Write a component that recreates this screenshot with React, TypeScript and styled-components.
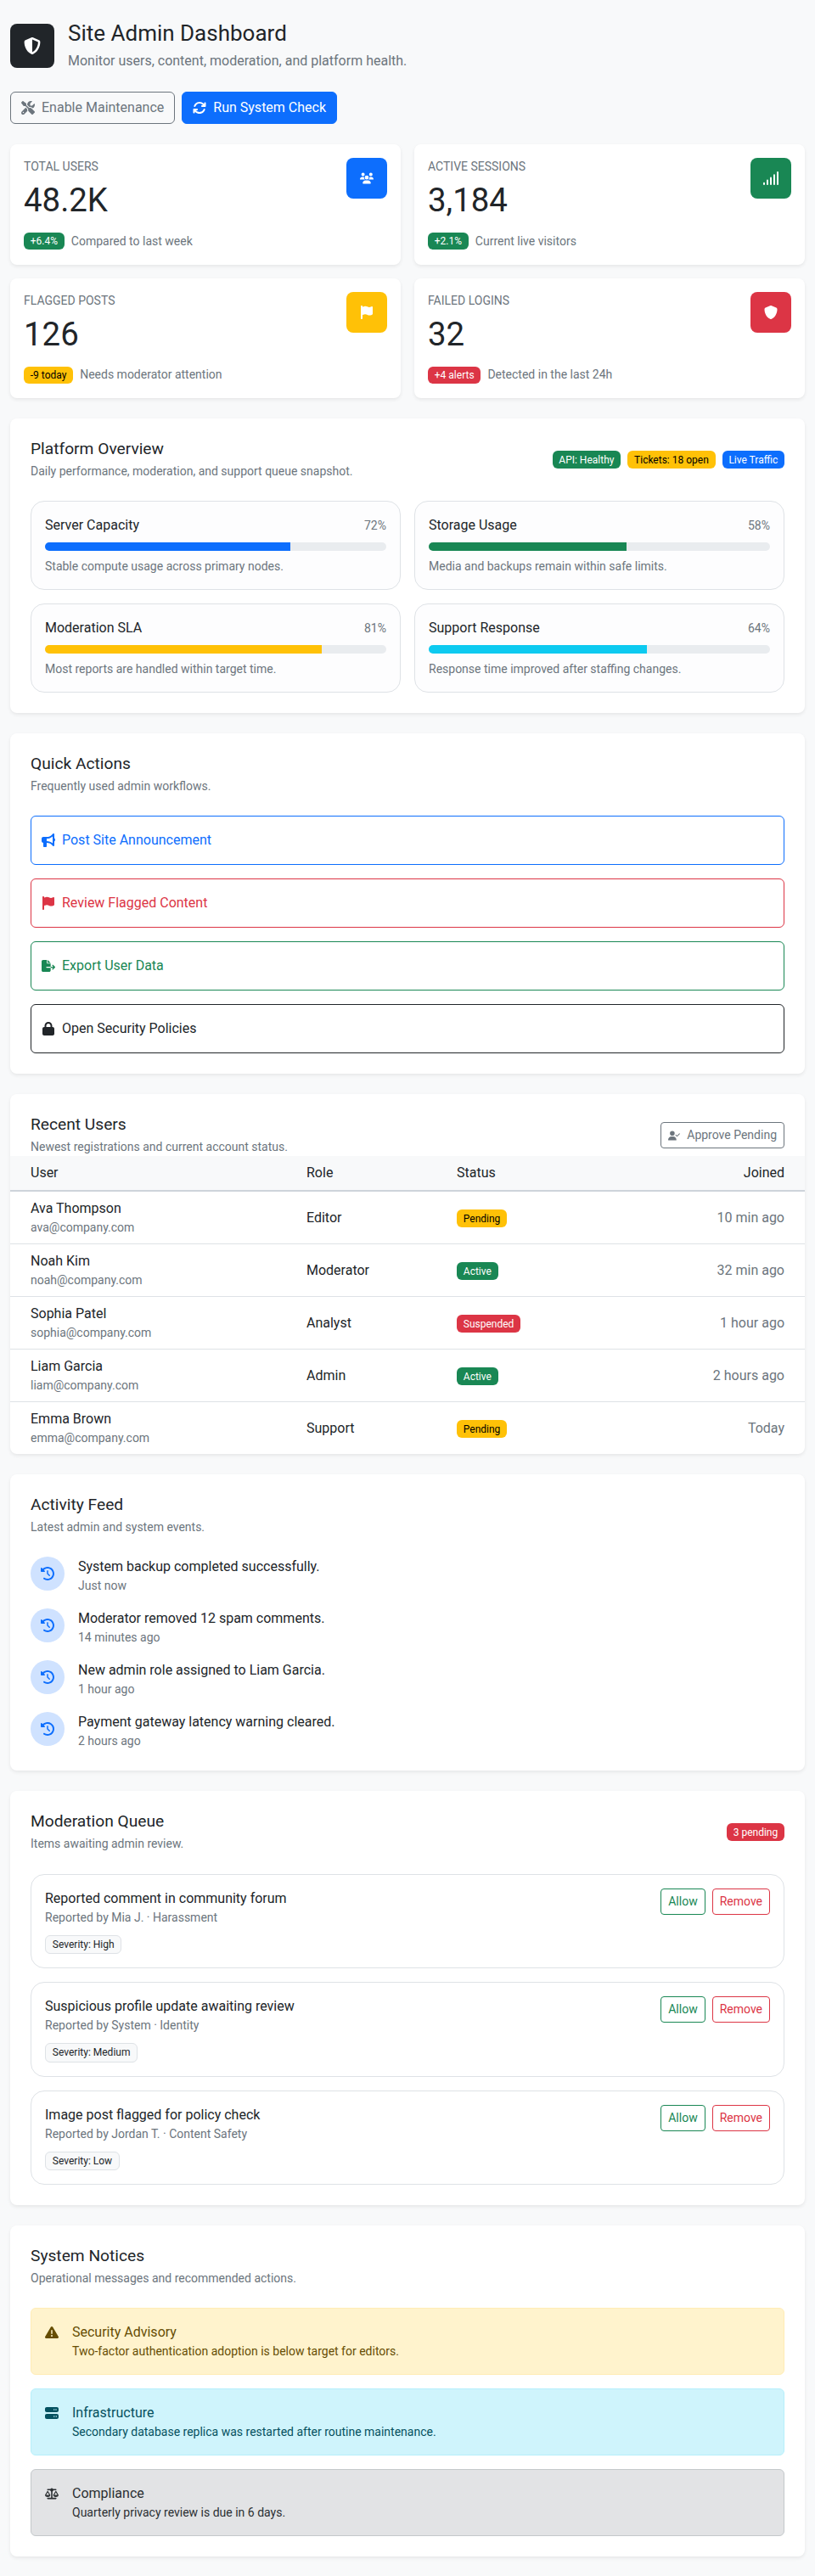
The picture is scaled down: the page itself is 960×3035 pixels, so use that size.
import React from "react";
import styled, { createGlobalStyle } from "styled-components";
import {
  FaArrowsRotate,
  FaBullhorn,
  FaClockRotateLeft,
  FaFileExport,
  FaFlag,
  FaLock,
  FaScaleBalanced,
  FaScrewdriverWrench,
  FaServer,
  FaShield,
  FaShieldHalved,
  FaTriangleExclamation,
  FaUserCheck,
  FaUsers,
} from "react-icons/fa6";

const colors = {
  primary: "#0d6efd",
  success: "#198754",
  warning: "#ffc107",
  danger: "#dc3545",
  info: "#0dcaf0",
  dark: "#212529",
  muted: "#6c757d",
  border: "#dee2e6",
};

type Tone = "primary" | "success" | "warning" | "danger" | "info" | "dark" | "muted";

const GlobalStyle = createGlobalStyle`
  * {
    box-sizing: border-box;
  }
  body {
    margin: 0;
    background: #f8f9fa;
    color: #212529;
    font-family: Roboto, "Liberation Sans", Arial, sans-serif;
    font-size: 16px;
    line-height: 1.5;
  }
  svg {
    flex: none;
    width: auto;
    height: 1em;
  }
`;

const Page = styled.main`
  display: flex;
  flex-direction: column;
  gap: 24px;
  padding: 24px 12px;
`;

const Header = styled.header`
  display: flex;
  align-items: center;
  gap: 16px;
  height: 60px;
`;

const LogoBox = styled.div`
  display: flex;
  align-items: center;
  justify-content: center;
  flex: none;
  width: 52px;
  height: 52px;
  border-radius: 8px;
  background: ${colors.dark};
  color: #fff;
  font-size: 20px;
`;

const PageTitle = styled.h1`
  margin: 0 0 4.8px;
  font-size: 26px;
  font-weight: 400;
  line-height: 1.2;
`;

const PageSubtitle = styled.p`
  margin: 0;
  color: ${colors.muted};
`;

const Toolbar = styled.div`
  display: flex;
  gap: 8px;
`;

const ToolbarButton = styled.button<{ $solid?: boolean }>`
  display: flex;
  align-items: center;
  gap: 8px;
  height: 38px;
  padding: 6px 12px;
  border: 1px solid ${(p) => (p.$solid ? colors.primary : colors.muted)};
  border-radius: 6px;
  background: ${(p) => (p.$solid ? colors.primary : "transparent")};
  color: ${(p) => (p.$solid ? "#fff" : colors.muted)};
  font: inherit;
`;

const StatGrid = styled.div`
  display: grid;
  grid-template-columns: 1fr 1fr;
  gap: 16px;
`;

const Card = styled.section`
  border-radius: 8px;
  background: #fff;
  box-shadow: 0 2px 4px rgba(0, 0, 0, 0.075);
`;

const StatCard = styled(Card)`
  padding: 16px;
`;

const StatTop = styled.div`
  display: flex;
  align-items: flex-start;
  justify-content: space-between;
`;

const StatLabel = styled.div`
  margin-bottom: 8px;
  color: ${colors.muted};
  font-size: 14px;
  text-transform: uppercase;
`;

const StatValue = styled.div`
  font-size: 38.4px;
  line-height: 42px;
`;

const StatIcon = styled.div<{ $tone: Tone }>`
  display: flex;
  align-items: center;
  justify-content: center;
  width: 48px;
  height: 48px;
  border-radius: 8px;
  background: ${(p) => colors[p.$tone]};
  color: #fff;
`;

const StatFoot = styled.div`
  display: flex;
  align-items: center;
  gap: 8px;
  height: 22.5px;
  margin-top: 16px;
  color: ${colors.muted};
  font-size: 14px;
`;

const Badge = styled.span<{ $tone: Tone }>`
  display: inline-block;
  padding: 4.2px 7.8px;
  border-radius: 6px;
  background: ${(p) => colors[p.$tone]};
  color: ${(p) => (p.$tone === "warning" ? "#000" : "#fff")};
  font-size: 12px;
  line-height: 12px;
  white-space: nowrap;
`;

const Panel = styled(Card)`
  padding: 24px;
`;

const PanelHead = styled.div<{ $tight?: boolean }>`
  display: flex;
  align-items: center;
  justify-content: space-between;
  margin-bottom: ${(p) => (p.$tight ? "0" : "24px")};
`;

const PanelTitle = styled.h2`
  margin: 0 0 4px;
  font-size: 19.2px;
  font-weight: 400;
  line-height: 24px;
`;

const PanelSub = styled.p`
  margin: 0;
  color: ${colors.muted};
  font-size: 14px;
`;

const BadgeRow = styled.div`
  display: flex;
  gap: 8px;
`;

const MetricGrid = styled.div`
  display: grid;
  grid-template-columns: 1fr 1fr;
  gap: 16px;
`;

const Metric = styled.div`
  padding: 16px;
  border: 1px solid ${colors.border};
  border-radius: 16px;
  background: #fdfdfe;
`;

const MetricHead = styled.div`
  display: flex;
  align-items: center;
  justify-content: space-between;
`;

const MetricValue = styled.span`
  color: ${colors.muted};
  font-size: 14px;
`;

const Track = styled.div`
  height: 10px;
  margin: 8px 0;
  border-radius: 5px;
  background: #e9ecef;
  overflow: hidden;
`;

const Fill = styled.div<{ $tone: Tone }>`
  height: 100%;
  background: ${(p) => colors[p.$tone]};
`;

const MetricNote = styled.div`
  color: ${colors.muted};
  font-size: 14px;
`;

const ActionList = styled.div`
  display: flex;
  flex-direction: column;
  gap: 16px;
`;

const ActionButton = styled.button<{ $tone: Tone }>`
  display: flex;
  align-items: center;
  gap: 8px;
  width: 100%;
  padding: 16px 12px;
  border: 1px solid ${(p) => colors[p.$tone]};
  border-radius: 6px;
  background: transparent;
  color: ${(p) => colors[p.$tone]};
  font: inherit;
`;

const SmallButton = styled.button<{ $tone: Tone }>`
  display: flex;
  align-items: center;
  gap: 8px;
  height: 31px;
  padding: 4px 8px;
  border: 1px solid ${(p) => colors[p.$tone]};
  border-radius: 4px;
  background: transparent;
  color: ${(p) => colors[p.$tone]};
  font: inherit;
  font-size: 14px;
`;

const TablePanel = styled(Card)`
  padding-top: 24px;
  overflow: hidden;
`;

const TableHeadArea = styled.div`
  padding: 0 24px;
`;

const Table = styled.table`
  width: 100%;
  border-collapse: collapse;
  table-layout: fixed;
`;

const Th = styled.th<{ $w: number; $right?: boolean }>`
  width: ${(p) => p.$w}px;
  padding: 8px 12px;
  border-bottom: 2px solid #ced4da;
  background: #f8f9fa;
  font-weight: 400;
  text-align: ${(p) => (p.$right ? "right" : "left")};
  &:first-child {
    padding-left: 24px;
  }
  &:last-child {
    padding-right: 24px;
  }
`;

const Td = styled.td<{ $right?: boolean }>`
  padding: 8px 12px;
  border-bottom: 1px solid ${colors.border};
  text-align: ${(p) => (p.$right ? "right" : "left")};
  color: ${(p) => (p.$right ? colors.muted : "inherit")};
  &:first-child {
    padding-left: 24px;
  }
  &:last-child {
    padding-right: 24px;
  }
  tr:last-child & {
    border-bottom: 0;
  }
`;

const Email = styled.div`
  color: ${colors.muted};
  font-size: 14px;
`;

const FeedList = styled.div`
  display: flex;
  flex-direction: column;
  gap: 16px;
`;

const FeedItem = styled.div`
  display: flex;
  gap: 16px;
`;

const FeedIcon = styled.div`
  display: flex;
  align-items: center;
  justify-content: center;
  flex: none;
  width: 40px;
  height: 40px;
  border-radius: 50%;
  background: #cfe2ff;
  color: ${colors.primary};
`;

const Muted = styled.div`
  color: ${colors.muted};
  font-size: 14px;
`;

const QueueList = styled.div`
  display: flex;
  flex-direction: column;
  gap: 16px;
  margin-top: 25px;
`;

const QueueHead = styled(PanelHead)`
  margin-bottom: 0;
`;

const QueueItem = styled.div`
  display: flex;
  align-items: flex-start;
  justify-content: space-between;
  padding: 16px;
  border: 1px solid ${colors.border};
  border-radius: 16px;
`;

const QueueActions = styled.div`
  display: flex;
  gap: 8px;
`;

const SeverityTag = styled.div`
  width: fit-content;
  height: 22.33px;
  margin-top: 10px;
  padding: 0 7.8px;
  border: 1px solid ${colors.border};
  border-radius: 6px;
  background: #f8f9fa;
  font-size: 12px;
  line-height: 20px;
`;

const NoticeList = styled.div`
  display: flex;
  flex-direction: column;
  gap: 16px;
`;

const noticeTones = {
  warning: { bg: "#fff3cd", line: "#ffecb5", text: "#664d03" },
  info: { bg: "#cff4fc", line: "#b6effb", text: "#055160" },
  dark: { bg: "#e2e3e5", line: "#c4c8cb", text: "#2b2f32" },
};

const Notice = styled.div<{ $tone: keyof typeof noticeTones }>`
  display: flex;
  gap: 16px;
  padding: 16px;
  border: 1px solid ${(p) => noticeTones[p.$tone].line};
  border-radius: 6px;
  background: ${(p) => noticeTones[p.$tone].bg};
  color: ${(p) => noticeTones[p.$tone].text};
`;

const NoticeIcon = styled.div`
  display: flex;
  align-items: center;
  height: 24px;
`;

const NoticeText = styled.div`
  font-size: 14px;
`;

const NoticeTitle = styled.div`
  font-size: 16px;
`;

// five rising bars, kept on whole pixels so they stay separate at this size
const SignalBars = () => (
  <svg viewBox="0 0 20 16" fill="currentColor" aria-hidden="true">
    <rect x="1" y="12.8" width="2" height="3.2" rx="1" />
    <rect x="5" y="9.6" width="2" height="6.4" rx="1" />
    <rect x="9" y="6.4" width="2" height="9.6" rx="1" />
    <rect x="13" y="3.2" width="2" height="12.8" rx="1" />
    <rect x="17" y="0" width="2" height="16" rx="1" />
  </svg>
);

const stats = [
  { label: "Total Users", value: "48.2K", tone: "primary", icon: <FaUsers />, badge: "+6.4%", badgeTone: "success", note: "Compared to last week" },
  { label: "Active Sessions", value: "3,184", tone: "success", icon: <SignalBars />, badge: "+2.1%", badgeTone: "success", note: "Current live visitors" },
  { label: "Flagged Posts", value: "126", tone: "warning", icon: <FaFlag />, badge: "-9 today", badgeTone: "warning", note: "Needs moderator attention" },
  { label: "Failed Logins", value: "32", tone: "danger", icon: <FaShield />, badge: "+4 alerts", badgeTone: "danger", note: "Detected in the last 24h" },
] as const;

const metrics = [
  { name: "Server Capacity", pct: 72, tone: "primary", note: "Stable compute usage across primary nodes." },
  { name: "Storage Usage", pct: 58, tone: "success", note: "Media and backups remain within safe limits." },
  { name: "Moderation SLA", pct: 81, tone: "warning", note: "Most reports are handled within target time." },
  { name: "Support Response", pct: 64, tone: "info", note: "Response time improved after staffing changes." },
] as const;

const actions = [
  { label: "Post Site Announcement", tone: "primary", icon: <FaBullhorn /> },
  { label: "Review Flagged Content", tone: "danger", icon: <FaFlag /> },
  { label: "Export User Data", tone: "success", icon: <FaFileExport /> },
  { label: "Open Security Policies", tone: "dark", icon: <FaLock /> },
] as const;

const users = [
  { name: "Ava Thompson", email: "ava@company.com", role: "Editor", status: "Pending", tone: "warning", joined: "10 min ago" },
  { name: "Noah Kim", email: "noah@company.com", role: "Moderator", status: "Active", tone: "success", joined: "32 min ago" },
  { name: "Sophia Patel", email: "sophia@company.com", role: "Analyst", status: "Suspended", tone: "danger", joined: "1 hour ago" },
  { name: "Liam Garcia", email: "liam@company.com", role: "Admin", status: "Active", tone: "success", joined: "2 hours ago" },
  { name: "Emma Brown", email: "emma@company.com", role: "Support", status: "Pending", tone: "warning", joined: "Today" },
] as const;

const feed = [
  { text: "System backup completed successfully.", time: "Just now" },
  { text: "Moderator removed 12 spam comments.", time: "14 minutes ago" },
  { text: "New admin role assigned to Liam Garcia.", time: "1 hour ago" },
  { text: "Payment gateway latency warning cleared.", time: "2 hours ago" },
];

const queue = [
  { title: "Reported comment in community forum", meta: "Reported by Mia J. · Harassment", severity: "High" },
  { title: "Suspicious profile update awaiting review", meta: "Reported by System · Identity", severity: "Medium" },
  { title: "Image post flagged for policy check", meta: "Reported by Jordan T. · Content Safety", severity: "Low" },
];

const notices = [
  { title: "Security Advisory", text: "Two-factor authentication adoption is below target for editors.", tone: "warning", icon: <FaTriangleExclamation /> },
  { title: "Infrastructure", text: "Secondary database replica was restarted after routine maintenance.", tone: "info", icon: <FaServer /> },
  { title: "Compliance", text: "Quarterly privacy review is due in 6 days.", tone: "dark", icon: <FaScaleBalanced /> },
] as const;

const App = () => {
  return (
    <Page>
      <GlobalStyle />
      <Header>
        <LogoBox>
          <FaShieldHalved />
        </LogoBox>
        <div>
          <PageTitle>Site Admin Dashboard</PageTitle>
          <PageSubtitle>Monitor users, content, moderation, and platform health.</PageSubtitle>
        </div>
      </Header>

      <Toolbar>
        <ToolbarButton>
          <FaScrewdriverWrench />
          Enable Maintenance
        </ToolbarButton>
        <ToolbarButton $solid>
          <FaArrowsRotate />
          Run System Check
        </ToolbarButton>
      </Toolbar>

      <StatGrid>
        {stats.map((s) => (
          <StatCard key={s.label}>
            <StatTop>
              <div>
                <StatLabel>{s.label}</StatLabel>
                <StatValue>{s.value}</StatValue>
              </div>
              <StatIcon $tone={s.tone}>{s.icon}</StatIcon>
            </StatTop>
            <StatFoot>
              <Badge $tone={s.badgeTone}>{s.badge}</Badge>
              {s.note}
            </StatFoot>
          </StatCard>
        ))}
      </StatGrid>

      <Panel>
        <PanelHead>
          <div>
            <PanelTitle>Platform Overview</PanelTitle>
            <PanelSub>Daily performance, moderation, and support queue snapshot.</PanelSub>
          </div>
          <BadgeRow>
            <Badge $tone="success">API: Healthy</Badge>
            <Badge $tone="warning">Tickets: 18 open</Badge>
            <Badge $tone="primary">Live Traffic</Badge>
          </BadgeRow>
        </PanelHead>
        <MetricGrid>
          {metrics.map((m) => (
            <Metric key={m.name}>
              <MetricHead>
                <span>{m.name}</span>
                <MetricValue>{m.pct}%</MetricValue>
              </MetricHead>
              <Track>
                <Fill $tone={m.tone} style={{ width: `${m.pct}%` }} />
              </Track>
              <MetricNote>{m.note}</MetricNote>
            </Metric>
          ))}
        </MetricGrid>
      </Panel>

      <Panel>
        <PanelHead>
          <div>
            <PanelTitle>Quick Actions</PanelTitle>
            <PanelSub>Frequently used admin workflows.</PanelSub>
          </div>
        </PanelHead>
        <ActionList>
          {actions.map((a) => (
            <ActionButton key={a.label} $tone={a.tone}>
              {a.icon}
              {a.label}
            </ActionButton>
          ))}
        </ActionList>
      </Panel>

      <TablePanel>
        <TableHeadArea>
          <PanelHead $tight>
            <div>
              <PanelTitle>Recent Users</PanelTitle>
              <PanelSub>Newest registrations and current account status.</PanelSub>
            </div>
            <SmallButton $tone="muted">
              <FaUserCheck />
              Approve Pending
            </SmallButton>
          </PanelHead>
        </TableHeadArea>
        <Table>
          <thead>
            <tr>
              <Th $w={337}>User</Th>
              <Th $w={177}>Role</Th>
              <Th $w={200}>Status</Th>
              <Th $w={222} $right>
                Joined
              </Th>
            </tr>
          </thead>
          <tbody>
            {users.map((u) => (
              <tr key={u.email}>
                <Td>
                  <div>{u.name}</div>
                  <Email>{u.email}</Email>
                </Td>
                <Td>{u.role}</Td>
                <Td>
                  <Badge $tone={u.tone}>{u.status}</Badge>
                </Td>
                <Td $right>{u.joined}</Td>
              </tr>
            ))}
          </tbody>
        </Table>
      </TablePanel>

      <Panel>
        <PanelHead>
          <div>
            <PanelTitle>Activity Feed</PanelTitle>
            <PanelSub>Latest admin and system events.</PanelSub>
          </div>
        </PanelHead>
        <FeedList>
          {feed.map((f) => (
            <FeedItem key={f.text}>
              <FeedIcon>
                <FaClockRotateLeft />
              </FeedIcon>
              <div>
                <div>{f.text}</div>
                <Muted>{f.time}</Muted>
              </div>
            </FeedItem>
          ))}
        </FeedList>
      </Panel>

      <Panel>
        <QueueHead>
          <div>
            <PanelTitle>Moderation Queue</PanelTitle>
            <PanelSub>Items awaiting admin review.</PanelSub>
          </div>
          <Badge $tone="danger">3 pending</Badge>
        </QueueHead>
        <QueueList>
          {queue.map((q) => (
            <QueueItem key={q.title}>
              <div>
                <div>{q.title}</div>
                <Muted>{q.meta}</Muted>
                <SeverityTag>Severity: {q.severity}</SeverityTag>
              </div>
              <QueueActions>
                <SmallButton $tone="success">Allow</SmallButton>
                <SmallButton $tone="danger">Remove</SmallButton>
              </QueueActions>
            </QueueItem>
          ))}
        </QueueList>
      </Panel>

      <Panel>
        <PanelHead>
          <div>
            <PanelTitle>System Notices</PanelTitle>
            <PanelSub>Operational messages and recommended actions.</PanelSub>
          </div>
        </PanelHead>
        <NoticeList>
          {notices.map((n) => (
            <Notice key={n.title} $tone={n.tone}>
              <NoticeIcon>{n.icon}</NoticeIcon>
              <NoticeText>
                <NoticeTitle>{n.title}</NoticeTitle>
                {n.text}
              </NoticeText>
            </Notice>
          ))}
        </NoticeList>
      </Panel>
    </Page>
  );
};

export default App;
